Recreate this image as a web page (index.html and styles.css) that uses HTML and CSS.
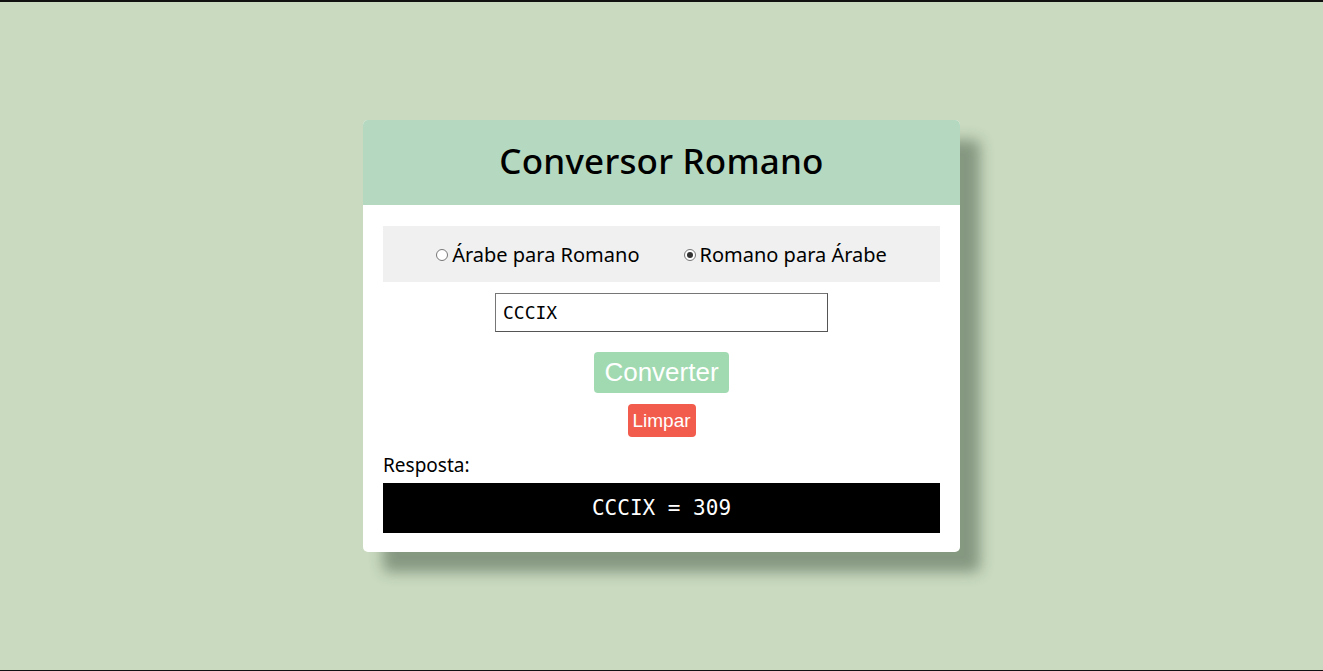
FILE: index.html
```html
<!DOCTYPE html>
<html lang="pt">
<head>
<meta charset="utf-8">
<title>Conversor Romano</title>
<link rel="stylesheet" href="styles.css">
</head>
<body>
<div class="page">
  <main class="card">
    <header class="card-header">
      <h1 class="title">Conversor Romano</h1>
    </header>
    <section class="card-body">
      <div class="modes">
        <label class="mode"><span class="radio"></span>Árabe para Romano</label>
        <label class="mode"><span class="radio checked"></span>Romano para Árabe</label>
      </div>
      <div class="field">CCCIX</div>
      <button class="btn-convert">Converter</button>
      <button class="btn-clear">Limpar</button>
      <div class="answer-label">Resposta:</div>
      <div class="answer">CCCIX = 309</div>
    </section>
  </main>
</div>
</body>
</html>
```
FILE: styles.css
```css
* { box-sizing: border-box; }
html, body { margin: 0; padding: 0; }
body {
  background: #c9dac0;
  font-family: "Noto Sans", "Open Sans", sans-serif;
}
.page {
  height: 671px;
  border-top: 2px solid #111;
  border-bottom: 1px solid #111;
  display: flex;
  align-items: center;
  justify-content: center;
}
.card {
  width: 597px;
  background: #fff;
  border-radius: 5px;
  box-shadow: 20px 20px 14px rgba(50, 70, 50, 0.45);
  overflow: hidden;
}
.card-header {
  height: 85px;
  background: #b5d8c1;
  display: flex;
  align-items: center;
  justify-content: center;
}
.title {
  margin: 0 0 4px;
  font-size: 35px;
  font-weight: 500;
  letter-spacing: 0.2px;
  color: #000;
}
.card-body {
  padding: 21px 20px 19px;
  display: flex;
  flex-direction: column;
  align-items: center;
}
.modes {
  align-self: stretch;
  height: 56px;
  background: #f0f0f0;
  display: flex;
  align-items: center;
  justify-content: center;
  gap: 44px;
  font-size: 20px;
  color: #000;
}
.mode {
  display: flex;
  align-items: center;
  gap: 4px;
}
.radio {
  width: 12px;
  height: 12px;
  border: 1px solid #767676;
  border-radius: 50%;
  background: #fff;
  display: inline-flex;
  align-items: center;
  justify-content: center;
  margin-top: 2px;
}
.radio.checked::after {
  content: "";
  width: 6px;
  height: 6px;
  border-radius: 50%;
  background: #333;
}
.field {
  margin-top: 11px;
  width: 333px;
  height: 39px;
  border: 1px solid #767676;
  border-right-color: #555;
  border-bottom-color: #555;
  padding: 0 7px;
  display: flex;
  align-items: center;
  font-family: "DejaVu Sans Mono", monospace;
  font-size: 18px;
  color: #000;
}
.btn-convert {
  margin-top: 20px;
  width: 135px;
  height: 41px;
  border: none;
  border-radius: 4px;
  background: #a1dab1;
  color: #fff;
  font-family: "Liberation Sans", Arial, sans-serif;
  font-size: 26px;
  padding: 0;
}
.btn-clear {
  margin-top: 11px;
  width: 68px;
  height: 33px;
  border: none;
  border-radius: 4px;
  background: #f25c4c;
  color: #fff;
  font-family: "Liberation Sans", Arial, sans-serif;
  font-size: 19px;
  padding: 0;
}
.answer-label {
  align-self: stretch;
  margin-top: 15px;
  font-size: 19px;
  line-height: 26px;
  color: #000;
}
.answer {
  align-self: stretch;
  margin-top: 5px;
  height: 50px;
  background: #000;
  color: #fff;
  display: flex;
  align-items: center;
  justify-content: center;
  font-family: "DejaVu Sans Mono", monospace;
  font-size: 21px;
  white-space: pre;
}
```
